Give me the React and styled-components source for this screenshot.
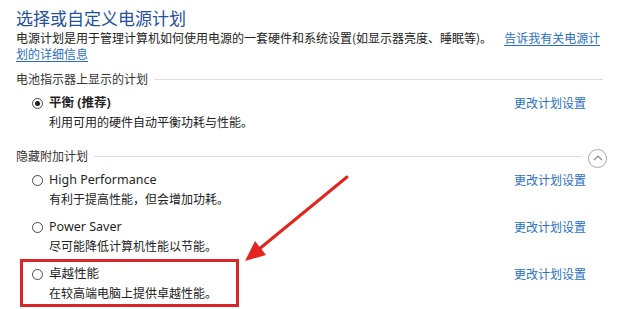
import React from 'react';
import styled, { createGlobalStyle } from 'styled-components';

const GlobalStyle = createGlobalStyle`
  html, body {
    margin: 0;
    padding: 0;
    background: #fff;
  }
  body {
    font-family: "Noto Sans", "Noto Sans CJK SC", sans-serif;
    color: #1f1f1f;
  }
`;

const plans = [
  { name: 'High Performance', desc: '有利于提高性能，但会增加功耗。' },
  { name: 'Power Saver', desc: '尽可能降低计算机性能以节能。' },
  { name: '卓越性能', desc: '在较高端电脑上提供卓越性能。' },
];

const App = () => (
  <Page>
    <GlobalStyle />
    <Title>选择或自定义电源计划</Title>
    <Intro>
      电源计划是用于管理计算机如何使用电源的一套硬件和系统设置(如显示器亮度、睡眠等)。
      <Link href="#" underline>告诉我有关电源计<br />划的详细信息</Link>
    </Intro>

    <SectionHeader>
      <SectionLabel>电池指示器上显示的计划</SectionLabel>
      <Rule />
    </SectionHeader>
    <PlanList>
      <Plan>
        <PlanInfo>
          <PlanTitle>
            <Radio checked />
            <PlanName bold>平衡 (推荐)</PlanName>
          </PlanTitle>
          <PlanDesc>利用可用的硬件自动平衡功耗与性能。</PlanDesc>
        </PlanInfo>
        <Link href="#">更改计划设置</Link>
      </Plan>
    </PlanList>

    <SectionHeader second>
      <SectionLabel>隐藏附加计划</SectionLabel>
      <Rule />
      <Collapse>
        <svg width="10" height="6" viewBox="0 0 10 6">
          <path d="M1 5 L5 1 L9 5" fill="none" stroke="#8a8a8a" strokeWidth="1.2" />
        </svg>
      </Collapse>
    </SectionHeader>
    <PlanList>
      {plans.map((p) => (
        <Plan key={p.name}>
          <PlanInfo>
            <PlanTitle>
              <Radio />
              <PlanName>{p.name}</PlanName>
            </PlanTitle>
            <PlanDesc>{p.desc}</PlanDesc>
          </PlanInfo>
          <Link href="#">更改计划设置</Link>
        </Plan>
      ))}
    </PlanList>

    <Highlight />
    <Arrow width="620" height="309" viewBox="0 0 620 309">
      <line x1="347" y1="177" x2="258" y2="250" stroke="#e3241f" strokeWidth="3" strokeLinecap="round" />
      <polygon points="245,261 266,255 255,241" fill="#e3241f" />
    </Arrow>
  </Page>
);

const Page = styled.div`
  position: relative;
  width: 620px;
  height: 309px;
  overflow: hidden;
  box-sizing: border-box;
  padding: 7px 17px 0 16px;
`;

const Title = styled.h1`
  margin: 0;
  font-family: "Noto Sans CJK SC", sans-serif;
  font-size: 17px;
  font-weight: 400;
  line-height: 22px;
  color: #23519e;
`;

const Intro = styled.p`
  margin: 1px 0 0;
  font-family: "Noto Sans CJK SC", sans-serif;
  font-size: 12px;
  line-height: 16px;
  color: #222;
`;

const Link = styled.a.withConfig({ shouldForwardProp: (prop) => prop !== 'underline' })`
  color: #2a6fc4;
  text-decoration: ${(p) => (p.underline ? 'underline' : 'none')};
  text-underline-offset: 2px;
  font-family: "Noto Sans CJK SC", sans-serif;
  font-size: 12px;
  white-space: nowrap;
  ${Intro} & {
    margin-left: 12px;
  }
`;

const SectionHeader = styled.div.withConfig({ shouldForwardProp: (prop) => prop !== 'second' })`
  display: flex;
  align-items: center;
  gap: 6px;
  margin-top: ${(p) => (p.second ? '17px' : '9px')};
  height: 16px;
`;

const SectionLabel = styled.span`
  font-family: "Noto Sans CJK SC", sans-serif;
  font-size: 12px;
  line-height: 16px;
  color: #333;
  white-space: nowrap;
`;

const Rule = styled.div`
  flex: 1;
  height: 1px;
  background: #dcdcdc;
`;

const Collapse = styled.span`
  width: 17px;
  height: 17px;
  border: 1px solid #a8a8a8;
  border-radius: 50%;
  display: flex;
  align-items: center;
  justify-content: center;
  margin-top: 4px;
  margin-right: -4px;
`;

const PlanList = styled.div`
  display: flex;
  flex-direction: column;
  gap: 10px;
  padding: 7px 17px 0 16px;
`;

const Plan = styled.div`
  display: flex;
  justify-content: space-between;
  align-items: flex-start;
`;

const PlanInfo = styled.div`
  display: flex;
  flex-direction: column;
  gap: 1px;
`;

const PlanTitle = styled.div`
  display: flex;
  align-items: center;
  gap: 6px;
  height: 18px;
`;

const Radio = styled.span.withConfig({ shouldForwardProp: (prop) => prop !== 'checked' })`
  width: 11px;
  height: 11px;
  box-sizing: border-box;
  border-radius: 50%;
  border: 1px solid #4a4a4a;
  display: flex;
  align-items: center;
  justify-content: center;
  &::after {
    content: "";
    width: 5px;
    height: 5px;
    border-radius: 50%;
    background: ${(p) => (p.checked ? '#222' : 'transparent')};
  }
`;

const PlanName = styled.span.withConfig({ shouldForwardProp: (prop) => prop !== 'bold' })`
  font-family: "Noto Sans", "Noto Sans CJK SC", sans-serif;
  font-size: 12.5px;
  line-height: 18px;
  font-weight: ${(p) => (p.bold ? 700 : 400)};
  color: #1f1f1f;
`;

const PlanDesc = styled.div`
  padding-left: 17px;
  font-family: "Noto Sans CJK SC", sans-serif;
  font-size: 12px;
  line-height: 18px;
  color: #222;
`;

const Highlight = styled.div`
  position: absolute;
  left: 20px;
  top: 259px;
  width: 219px;
  height: 48px;
  box-sizing: border-box;
  border: 3px solid #d92628;
`;

const Arrow = styled.svg`
  position: absolute;
  left: 0;
  top: 0;
  pointer-events: none;
`;

export default App;
